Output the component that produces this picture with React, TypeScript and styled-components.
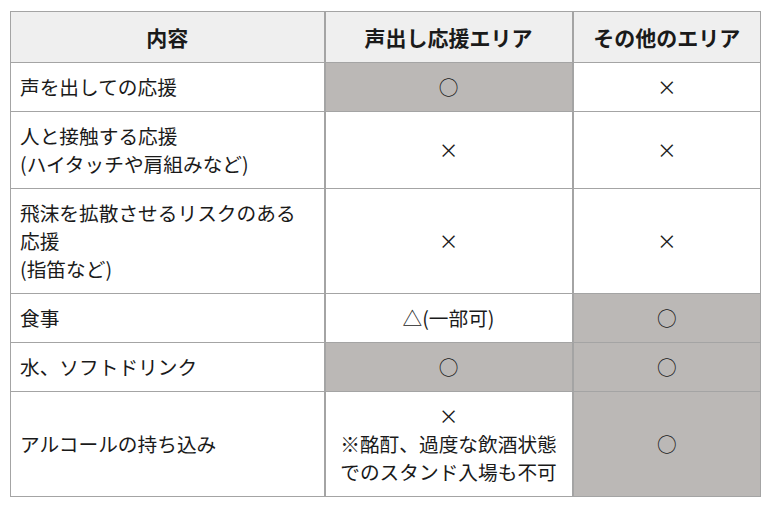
import React from "react";
import styled, { createGlobalStyle } from "styled-components";

const GlobalStyle = createGlobalStyle`
  body {
    margin: 0;
    background: #ffffff;
    font-family: "Noto Sans CJK JP", sans-serif;
    color: #1a1a1a;
  }
`;

const Wrapper = styled.div`
  padding: 11px 0 0 10px;
`;

const Table = styled.table`
  width: 750px;
  border-collapse: collapse;
  table-layout: fixed;
  font-size: 19.7px;
  line-height: 28px;
`;

const Th = styled.th`
  background-color: #efefef;
  font-size: 21px;
  font-weight: 700;
  text-align: center;
  padding: 11px 8px;
  border: 1px solid #a4a4a4;
  & + & {
    border-left-width: 2px;
  }
`;

const Td = styled.td<{ $shaded?: boolean; $center?: boolean }>`
  background-color: ${({ $shaded }) => ($shaded ? "#bbb8b6" : "#ffffff")};
  text-align: ${({ $center }) => ($center ? "center" : "left")};
  vertical-align: middle;
  padding: 10px 9px;
  border: 1px solid #a4a4a4;
  & + & {
    border-left-width: 2px;
  }
`;

type Cell = { text: React.ReactNode; shaded?: boolean };

interface RowData {
  label: React.ReactNode;
  cheer: Cell;
  other: Cell;
}

const rows: RowData[] = [
  {
    label: "声を出しての応援",
    cheer: { text: "○", shaded: true },
    other: { text: "×" },
  },
  {
    label: (
      <>
        人と接触する応援
        <br />
        (ハイタッチや肩組みなど)
      </>
    ),
    cheer: { text: "×" },
    other: { text: "×" },
  },
  {
    label: (
      <>
        飛沫を拡散させるリスクのある
        <br />
        応援
        <br />
        (指笛など)
      </>
    ),
    cheer: { text: "×" },
    other: { text: "×" },
  },
  {
    label: "食事",
    cheer: { text: "△(一部可)" },
    other: { text: "○", shaded: true },
  },
  {
    label: "水、ソフトドリンク",
    cheer: { text: "○", shaded: true },
    other: { text: "○", shaded: true },
  },
  {
    label: "アルコールの持ち込み",
    cheer: {
      text: (
        <>
          ×
          <br />
          ※酩酊、過度な飲酒状態
          <br />
          でのスタンド入場も不可
        </>
      ),
    },
    other: { text: "○", shaded: true },
  },
];

const App: React.FC = () => {
  return (
    <>
      <GlobalStyle />
      <Wrapper>
        <Table>
          <colgroup>
            <col style={{ width: 314 }} />
            <col style={{ width: 248 }} />
            <col style={{ width: 188 }} />
          </colgroup>
          <thead>
            <tr>
              <Th>内容</Th>
              <Th>声出し応援エリア</Th>
              <Th>その他のエリア</Th>
            </tr>
          </thead>
          <tbody>
            {rows.map((row, i) => (
              <tr key={i}>
                <Td>{row.label}</Td>
                <Td $center $shaded={row.cheer.shaded}>
                  {row.cheer.text}
                </Td>
                <Td $center $shaded={row.other.shaded}>
                  {row.other.text}
                </Td>
              </tr>
            ))}
          </tbody>
        </Table>
      </Wrapper>
    </>
  );
};

export default App;
